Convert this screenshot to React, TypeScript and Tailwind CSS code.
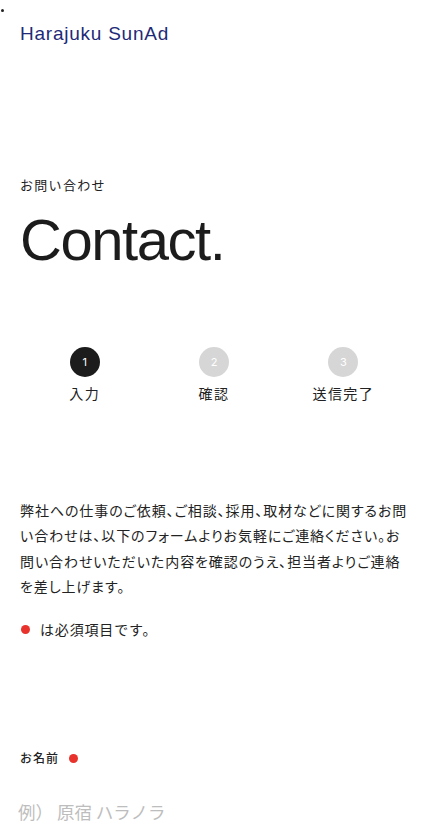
import { useState } from 'react';

const steps = [
  { num: 1, label: '入力', active: true },
  { num: 2, label: '確認', active: false },
  { num: 3, label: '送信完了', active: false },
];

const jp = "font-['Noto_Sans_CJK_JP',sans-serif]";

export default function App() {
  const [name, setName] = useState('');

  return (
    <div className={`min-h-screen bg-white text-[#222] ${jp}`}>
      {/* stray dot top-left */}
      <div className="h-[3px] w-[3px] rounded-full bg-[#222] ml-[1px] translate-y-[9px]" />

      <header className="px-5 pt-[18px]">
        <p className="font-['Liberation_Sans',sans-serif] text-[19px] leading-[26px] text-[#1e2a78] tracking-[0.04em]">
          Harajuku SunAd
        </p>
      </header>

      <section className="px-5 pt-[129px]">
        <p className="text-[13px] leading-[18px] tracking-[0.1em]">お問い合わせ</p>
        <h1 className="font-['Liberation_Sans',sans-serif] text-[58px] leading-[60px] tracking-[-0.025em] mt-[16px] text-[#1c1c1c]">
          Contact.
        </h1>
      </section>

      <nav className="grid grid-cols-3 px-5 mt-[77px]">
        {steps.map((s) => (
          <div key={s.num} className="flex flex-col items-center">
            <div
              className={
                s.active
                  ? 'w-[30px] h-[30px] rounded-full bg-[#1c1c1c] text-white flex items-center justify-center text-[11px] font-["Inter",sans-serif]'
                  : 'w-[30px] h-[30px] rounded-full bg-[#d6d6d6] text-white flex items-center justify-center text-[11px] font-["Inter",sans-serif]'
              }
            >
              {s.num}
            </div>
            <span className="mt-[6px] text-[14px] leading-[20px] tracking-[0.1em]">{s.label}</span>
          </div>
        ))}
      </nav>

      <section className="px-5 mt-[95px]">
        <p className="text-[14px] leading-[25.3px] tracking-[0.065em] [font-feature-settings:'palt'] whitespace-nowrap">
          弊社への仕事のご依頼、ご相談、採用、取材などに関するお問
          <br />
          い合わせは、以下のフォームよりお気軽にご連絡ください。お
          <br />
          問い合わせいただいた内容を確認のうえ、担当者よりご連絡
          <br />
          を差し上げます。
        </p>
        <div className="flex items-center gap-[10px] mt-[20px]">
          <span className="w-[9px] h-[9px] rounded-full bg-[#e8322b] ml-[1px]" />
          <span className="text-[14px] leading-[20px] tracking-[0.06em]">は必須項目です。</span>
        </div>
      </section>

      <form className="px-5 mt-[110px]" onSubmit={(e) => e.preventDefault()}>
        <label className="flex items-center gap-[10px] text-[12px] leading-[18px] font-medium tracking-[0.08em]">
          お名前
          <span className="w-[9px] h-[9px] rounded-full bg-[#e8322b]" />
        </label>
        <input
          value={name}
          onChange={(e) => setName(e.target.value)}
          placeholder="例） 原宿 ハラノラ"
          className="mt-[31px] -ml-[2px] w-full text-[17.5px] leading-[28px] outline-none placeholder:text-[#bdbdbd]"
        />
      </form>
    </div>
  );
}
